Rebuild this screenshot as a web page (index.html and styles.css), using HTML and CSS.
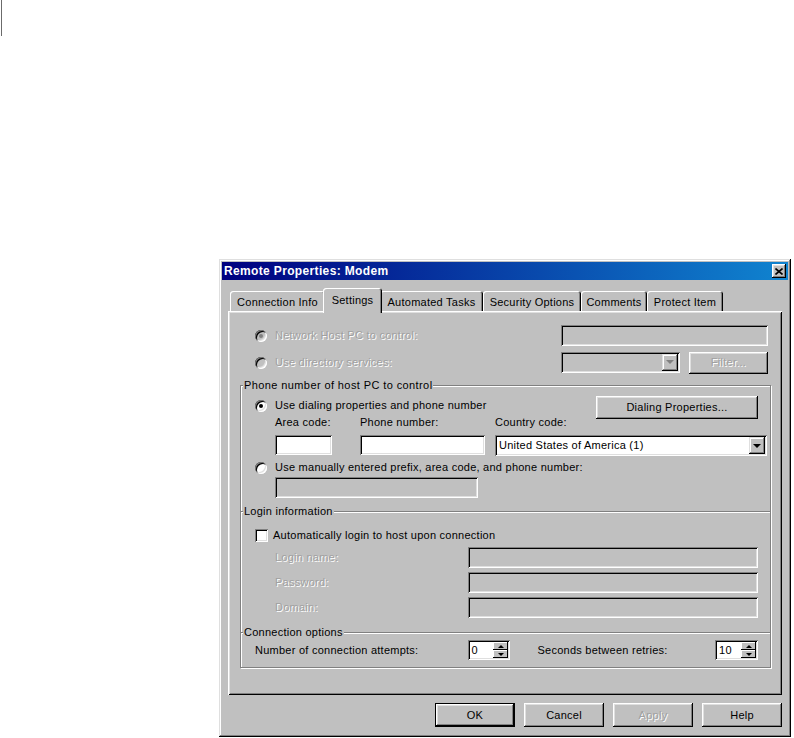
FILE: index.html
```html
<!DOCTYPE html>
<html>
<head>
    <title>Remote Properties: Modem</title>
    <link rel="stylesheet" href="styles.css">
</head>
<body>
    <div class="caret"></div>
    <div class="dialog">
        <div class="titlebar">
            <span>Remote Properties: Modem</span>
            <span class="close">
                <svg width="8" height="7" viewBox="0 0 8 7"><path d="M0.5 0.5l7 6M7.5 0.5l-7 6" stroke="#000" stroke-width="1.6"/></svg>
            </span>
        </div>

        <div class="content">
            <div class="tabs">
                <div class="tab tab-info">Connection Info</div>
                <div class="tab tab-settings active">Settings</div>
                <div class="tab tab-tasks">Automated Tasks</div>
                <div class="tab tab-security">Security Options</div>
                <div class="tab tab-comments">Comments</div>
                <div class="tab tab-protect">Protect Item</div>
            </div>

            <div class="panel">
                <div class="host">
                    <div class="host-row">
                        <label class="option off-text"><span class="radio on off"></span>Network Host PC to control:</label>
                        <span class="field off host-name"></span>
                    </div>
                    <div class="host-row">
                        <label class="option off-text"><span class="radio off"></span>Use directory services:</label>
                        <span class="pick">
                            <span class="field off directory"><span class="drop"><i class="arrow off"></i></span></span>
                            <span class="btn off-text filter">Filter...</span>
                        </span>
                    </div>
                </div>

                <fieldset class="group phone">
                    <legend>Phone number of host PC to control</legend>
                    <div class="dial-row">
                        <label class="option"><span class="radio on"></span>Use dialing properties and phone number</label>
                        <span class="btn dial">Dialing Properties...</span>
                    </div>
                    <div class="number-grid">
                        <span>Area code:</span>
                        <span>Phone number:</span>
                        <span>Country code:</span>
                        <span class="field area"></span>
                        <span class="field phone-no"></span>
                        <span class="field select">United States of America (1)<span class="drop"><i class="arrow"></i></span></span>
                    </div>
                    <label class="option manual"><span class="radio"></span>Use manually entered prefix, area code, and phone number:</label>
                    <span class="field off manual-no"></span>
                </fieldset>

                <fieldset class="group login">
                    <legend>Login information</legend>
                    <label class="check-row"><span class="check"></span>Automatically login to host upon connection</label>
                    <div class="login-grid">
                        <span class="off-text">Login name:</span><span class="field off"></span>
                        <span class="off-text">Password:</span><span class="field off"></span>
                        <span class="off-text">Domain:</span><span class="field off"></span>
                    </div>
                </fieldset>

                <fieldset class="group conn">
                    <legend>Connection options</legend>
                    <div class="conn-row">
                        <span class="attempts">Number of connection attempts:</span>
                        <span class="spin">
                            <span class="spin-value">0</span>
                            <span class="spin-btns"><span class="step"><i class="up"></i></span><span class="step"><i class="down"></i></span></span>
                        </span>
                        <span class="retries">Seconds between retries:</span>
                        <span class="spin">
                            <span class="spin-value">10</span>
                            <span class="spin-btns"><span class="step"><i class="up"></i></span><span class="step"><i class="down"></i></span></span>
                        </span>
                    </div>
                </fieldset>
            </div>

            <div class="footer">
                <span class="btn default">OK</span>
                <span class="btn">Cancel</span>
                <span class="btn off-text">Apply</span>
                <span class="btn">Help</span>
            </div>
        </div>
    </div>
</body>
</html>
```

FILE: styles.css
```css
html, body {
    margin: 0;
    overflow: hidden;
}

body {
    background: #fff;
    font-family: "Liberation Sans", Arial, sans-serif;
    font-size: 11px;
    line-height: 13px;
    letter-spacing: 0.25px;
    color: #000;
}

.caret {
    width: 1px;
    height: 36px;
    margin-left: 1px;
    background: #6b6b6b;
}

.dialog {
    box-sizing: border-box;
    width: 572px;
    height: 478px;
    margin: 223px 0 0 219px;
    padding: 3px;
    background: #c0c0c0;
    box-shadow: inset -1px -1px #000, inset 1px 1px #dfdfdf, inset -2px -2px #808080, inset 2px 2px #fff;
}

.titlebar {
    height: 18px;
    display: flex;
    align-items: center;
    justify-content: space-between;
    padding: 0 2px;
    background: linear-gradient(to right, #000080, #1084d0);
    color: #fff;
    font-weight: bold;
    font-size: 12px;
    letter-spacing: 0.35px;
}

.close {
    width: 14px;
    height: 14px;
    display: flex;
    align-items: center;
    justify-content: center;
    background: #c0c0c0;
    box-shadow: inset -1px -1px #000, inset 1px 1px #fff, inset -2px -2px #808080, inset 2px 2px #dfdfdf;
}

.content {
    padding: 0 6px;
}

/* tabs */
.tabs {
    display: flex;
    align-items: flex-end;
    height: 23px;
    margin-top: 8px;
    padding-left: 2px;
}

.tab {
    box-sizing: border-box;
    height: 20px;
    padding-top: 2px;
    display: flex;
    align-items: center;
    justify-content: center;
    border-radius: 3px 3px 0 0;
    background: #c0c0c0;
    box-shadow: inset 1px 1px #fff, inset -1px 0 #000, inset -2px 0 #808080;
}

.tab-info { width: 95px; }
.tab-settings { width: 55px; }
.tab-tasks { width: 103px; }
.tab-security { width: 98px; }
.tab-comments { width: 66px; }
.tab-protect { width: 76px; }

.tab.active {
    position: relative;
    z-index: 1;
    width: 59px;
    height: 25px;
    margin: 0 -2px -2px;
    padding-top: 0;
}

.panel {
    box-sizing: border-box;
    height: 384px;
    padding: 2px 11px 0 12px;
    background: #c0c0c0;
    box-shadow: inset 1px 1px #fff, inset -1px -1px #000, inset 2px 2px #dfdfdf, inset -2px -2px #808080;
}

/* common controls */
.off-text {
    color: #a0a0a0;
    text-shadow: 1px 1px 0 #fff;
}

.field {
    box-sizing: border-box;
    height: 21px;
    padding: 0 2px 0 4px;
    display: flex;
    align-items: center;
    background: #fff;
    box-shadow: inset 1px 1px #808080, inset -1px -1px #fff, inset 2px 2px #000, inset -2px -2px #dfdfdf;
}

.field.off {
    background: #c0c0c0;
}

.btn {
    box-sizing: border-box;
    width: 80px;
    height: 24px;
    display: flex;
    align-items: center;
    justify-content: center;
    background: #c0c0c0;
    box-shadow: inset -1px -1px #000, inset 1px 1px #fff, inset -2px -2px #808080, inset 2px 2px #dfdfdf;
}

.btn.default {
    box-shadow: inset 0 0 0 1px #000, inset -2px -2px #000, inset 2px 2px #fff, inset -3px -3px #808080, inset 3px 3px #dfdfdf;
}

.option {
    display: flex;
    align-items: center;
    gap: 8px;
}

.radio {
    width: 12px;
    height: 12px;
    border-radius: 50%;
    display: flex;
    align-items: center;
    justify-content: center;
    background: #fff;
    box-shadow: inset 1px 1px #808080, inset -1px -1px #fff, inset 2px 2px #000, inset -2px -2px #dfdfdf;
}

.radio.off {
    background: #c0c0c0;
}

.radio.on::after {
    content: "";
    width: 4px;
    height: 4px;
    border-radius: 50%;
    background: #000;
}

.radio.off.on::after {
    background: #808080;
}

.check-row {
    display: flex;
    align-items: center;
    gap: 5px;
    height: 13px;
}

.check {
    width: 13px;
    height: 13px;
    background: #fff;
    box-shadow: inset 1px 1px #808080, inset -1px -1px #fff, inset 2px 2px #000, inset -2px -2px #dfdfdf;
}

.drop {
    width: 16px;
    height: 17px;
    margin-left: auto;
    display: flex;
    align-items: center;
    justify-content: center;
    background: #c0c0c0;
    box-shadow: inset -1px -1px #000, inset 1px 1px #dfdfdf, inset -2px -2px #808080, inset 2px 2px #fff;
}

.arrow {
    width: 0;
    height: 0;
    border-left: 4px solid transparent;
    border-right: 4px solid transparent;
    border-top: 4px solid #000;
}

.arrow.off {
    border-top-color: #808080;
}

/* top rows */
.host {
    margin: 12px 3px 0 15px;
}

.host-row {
    height: 21px;
    display: flex;
    align-items: center;
    justify-content: space-between;
}

.host-row + .host-row {
    margin-top: 6px;
}

.host-name {
    width: 207px;
}

.pick {
    display: flex;
    gap: 9px;
}

.directory {
    width: 119px;
}

.filter {
    width: 79px;
    height: 22px;
}

/* group boxes */
.group {
    margin: 0;
    min-width: 0;
    border: 1px solid #808080;
    box-shadow: inset 1px 1px #fff, 1px 1px #fff;
}

.group legend {
    margin-left: -12px;
    padding: 0 1px;
    background: #c0c0c0;
    line-height: 13px;
}

.phone {
    margin-top: 6px;
    padding: 4px 3px 13px 14px;
}

.phone legend {
    letter-spacing: 0.4px;
}

.dial-row {
    height: 20px;
    margin-right: 9px;
    display: flex;
    align-items: flex-start;
    justify-content: space-between;
}

.dial-row .option {
    margin-top: 3px;
}

.dial {
    width: 162px;
    height: 23px;
}

.number-grid {
    display: grid;
    grid-template-columns: 85px 135px 1fr;
    grid-template-rows: 13px 21px;
    row-gap: 6px;
    margin-left: 20px;
}

.area {
    width: 57px;
    height: 20px;
}

.phone-no {
    width: 125px;
    height: 20px;
}

.manual {
    margin-top: 5px;
}

.manual-no {
    width: 203px;
    margin: 3px 0 0 20px;
}

.login {
    margin-top: -7px;
    padding: 11px 12px 14px 14px;
}

.login-grid {
    display: grid;
    grid-template-columns: 193px 290px;
    grid-auto-rows: 21px;
    row-gap: 4px;
    align-items: center;
    margin: 5px 0 0 20px;
}

.conn {
    margin-top: -7px;
    padding: 1px 12px 7px 14px;
}

.conn-row {
    height: 20px;
    display: flex;
    align-items: center;
}

.attempts {
    width: 213px;
}

.retries {
    width: 178px;
    margin-left: 27px;
}

.spin {
    box-sizing: border-box;
    width: 43px;
    height: 20px;
    padding: 2px;
    display: flex;
    background: #fff;
    box-shadow: inset 1px 1px #808080, inset -1px -1px #fff, inset 2px 2px #000, inset -2px -2px #dfdfdf;
}

.spin-value {
    flex: 1;
    padding-left: 2px;
    display: flex;
    align-items: center;
}

.spin-btns {
    width: 15px;
    display: flex;
    flex-direction: column;
}

.step {
    height: 8px;
    display: flex;
    align-items: center;
    justify-content: center;
    background: #c0c0c0;
    box-shadow: inset -1px -1px #000, inset 1px 1px #fff;
}

.up, .down {
    width: 0;
    height: 0;
    border-left: 3px solid transparent;
    border-right: 3px solid transparent;
}

.up {
    border-bottom: 3px solid #000;
}

.down {
    border-top: 3px solid #000;
}

.footer {
    display: flex;
    justify-content: flex-end;
    gap: 9px;
    margin-top: 8px;
}
```
